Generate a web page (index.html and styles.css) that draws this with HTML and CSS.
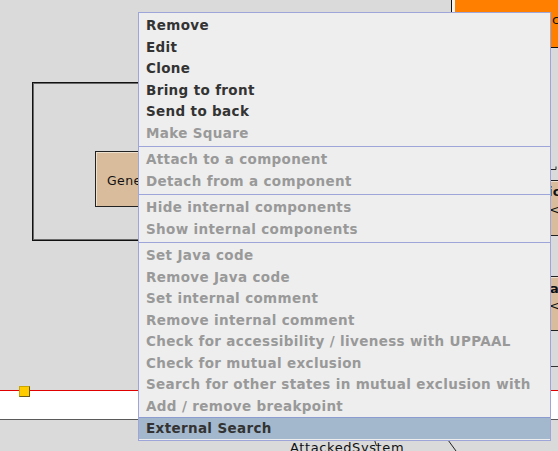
FILE: index.html
```html
<!DOCTYPE html>
<html>
<head>
<meta charset="utf-8">
<link rel="stylesheet" href="styles.css">
</head>
<body>
<div class="canvas">
  <div class="orange"><span class="orange-label">c</span></div>
  <div class="frame"></div>
  <div class="node gene"><span>Gene</span></div>
  <div class="node right-a"></div>
  <div class="node right-b"></div>
  <span class="lbl bold la1">ic</span>
  <span class="lbl la2">&lt;A</span>
  <span class="lbl bold lb1">af</span>
  <span class="lbl lb2">&lt;A</span>
  <div class="hline h366"></div>
  <div class="lane">
    <div class="handle"></div>
  </div>
  <span class="lbl attacked">AttackedSystem</span>
  <svg class="wires" width="558" height="451" viewBox="0 0 558 451">
    <path d="M551 169.5 H556 V166.5" fill="none" stroke="#222" stroke-width="1"/>
    <path d="M374.5 440 L376.5 446" fill="none" stroke="#222" stroke-width="1"/>
    <path d="M448 440 L456 451" fill="none" stroke="#222" stroke-width="1"/>
  </svg>

  <div class="menu">
    <div class="item">Remove</div>
    <div class="item">Edit</div>
    <div class="item">Clone</div>
    <div class="item">Bring to front</div>
    <div class="item">Send to back</div>
    <div class="item off">Make Square</div>
    <div class="sep"></div>
    <div class="item off">Attach to a component</div>
    <div class="item off">Detach from a component</div>
    <div class="sep"></div>
    <div class="item off">Hide internal components</div>
    <div class="item off">Show internal components</div>
    <div class="sep"></div>
    <div class="item off">Set Java code</div>
    <div class="item off">Remove Java code</div>
    <div class="item off">Set internal comment</div>
    <div class="item off">Remove internal comment</div>
    <div class="item off">Check for accessibility / liveness with UPPAAL</div>
    <div class="item off">Check for mutual exclusion</div>
    <div class="item off">Search for other states in mutual exclusion with</div>
    <div class="item off">Add / remove breakpoint</div>
    <div class="item active">External Search</div>
  </div>
</div>
</body>
</html>
```
FILE: styles.css
```css
html, body {
  margin: 0;
  padding: 0;
}
body {
  width: 558px;
  height: 451px;
  overflow: hidden;
  background: #dadada;
  font-family: "DejaVu Sans", "Noto Sans", sans-serif;
}
.canvas {
  position: relative;
  width: 558px;
  height: 451px;
  overflow: hidden;
  background: #dadada;
}

/* diagram elements on the free canvas */
.orange {
  position: absolute;
  left: 451px;
  top: -10px;
  width: 160px;
  height: 58px;
  box-sizing: border-box;
  background: #ff8000;
  border-left: 1px solid #111;
  border-bottom: 1px solid #111;
  box-shadow: inset 3px 0 0 #f4f4f4;
}
.orange-label {
  position: absolute;
  left: 100px;
  top: 22px;
  font-size: 13px;
  line-height: 15px;
  color: #111;
}
.frame {
  position: absolute;
  left: 32px;
  top: 82px;
  width: 220px;
  height: 159px;
  box-sizing: border-box;
  border: 1px solid #111;
  box-shadow: inset 1px 1px 0 #6a6a6a, inset -1px -1px 0 #6a6a6a;
}
.node {
  position: absolute;
  box-sizing: border-box;
  background: #d9bc9b;
  border: 1px solid #222;
  box-shadow: inset 1px 1px 0 #eee0cf;
}
.gene {
  left: 95px;
  top: 151px;
  width: 120px;
  height: 56px;
  display: flex;
  align-items: center;
  padding: 3px 0 0 11px;
  font-size: 12.5px;
  letter-spacing: 0.4px;
  line-height: 15px;
  color: #111;
}
.right-a {
  left: 500px;
  top: 180px;
  width: 120px;
  height: 56px;
}
.right-b {
  left: 500px;
  top: 276px;
  width: 120px;
  height: 55px;
}
.lbl {
  position: absolute;
  font-size: 13px;
  letter-spacing: 0.4px;
  line-height: 15px;
  color: #111;
  white-space: nowrap;
}
.bold {
  font-weight: bold;
}
.la1 { left: 548px; top: 184px; }
.la2 { left: 549px; top: 202px; }
.lb1 { left: 550px; top: 281px; }
.lb2 { left: 549px; top: 298px; }
.hline {
  position: absolute;
  height: 1px;
  background: #333;
}
.h366 {
  left: 500px;
  top: 366px;
  width: 60px;
}
.lane {
  position: absolute;
  left: 0;
  top: 390px;
  width: 558px;
  height: 30px;
  box-sizing: border-box;
  background: #fff;
  border-top: 1px solid #e00000;
  border-bottom: 1px solid #5a5a5a;
}
.handle {
  position: absolute;
  left: 19px;
  top: -5px;
  width: 9px;
  height: 9px;
  background: #ffcc00;
  border: 1px solid #6a5a20;
  border-top-color: #c9a600;
  border-left-color: #c9a600;
}
.attacked {
  left: 290px;
  top: 440px;
  letter-spacing: 0.6px;
}
.wires {
  position: absolute;
  left: 0;
  top: 0;
}

/* popup menu */
.menu {
  position: absolute;
  left: 138px;
  top: 12px;
  width: 413px;
  box-sizing: border-box;
  background: #eeeeee;
  border: 1px solid #9ea5d9;
  padding: 2px 0 1px;
  font-family: "DejaVu Sans", sans-serif;
  font-weight: bold;
  font-size: 13.5px;
  letter-spacing: 0.35px;
  z-index: 5;
}
.item {
  height: 21.5px;
  line-height: 21.5px;
  padding-left: 7px;
  color: #333333;
  white-space: nowrap;
  box-sizing: border-box;
}
.item.off {
  color: #999999;
}
.item.active {
  background: #a3b8cc;
  border-top: 1px solid #8c9bd0;
  line-height: 20.5px;
}
.sep {
  height: 5px;
  box-sizing: border-box;
  padding-top: 1.5px;
}
.sep::before {
  content: "";
  display: block;
  height: 1px;
  background: #9ea5d9;
}
```
